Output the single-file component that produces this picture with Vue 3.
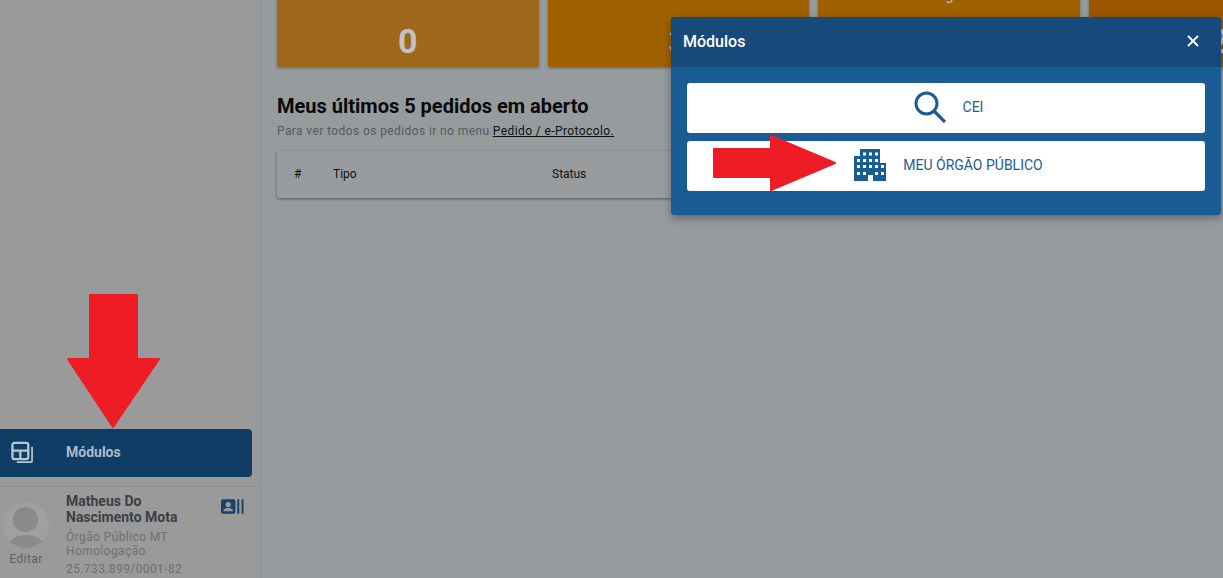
<script setup>
const cards = [
  { label: 'Pais', valor: '0', cor: '#a0681c' },
  { label: 'Em dia', valor: '3', cor: '#a06100' },
  { label: 'Pagos', valor: '1', cor: '#a06100' },
  { label: 'Prazos', valor: '2', cor: '#9c5600' }
]
const colunas = ['#', 'Tipo', 'Status']

// janelas do predio, em coordenadas do viewBox
const janelas = [
  [9, 3.5], [15, 3.5], [21, 3.5],
  [3, 10], [9, 10], [15, 10], [21, 10],
  [3, 16], [9, 16], [15, 16], [21, 16], [27, 16],
  [3, 23], [9, 23], [21, 23], [27, 23]
]
</script>

<template>
  <div class="pagina">
    <aside class="lateral">
      <div class="modulos">
        <svg class="icone-modulos" viewBox="0 0 24 24" fill="none" stroke="#b9c5d0" stroke-width="2.400">
          <rect x="1.500" y="2" width="16.500" height="17" rx="2" />
          <path d="M1.500 10h16.500M9.750 10v9" />
          <path d="M22 6v15a1 1 0 0 1-1 1H6" stroke-width="1.800" />
        </svg>
        <span>Módulos</span>
      </div>
      <div class="usuario">
        <div class="coluna-foto">
          <div class="avatar">
            <span class="cabeca"></span>
            <span class="corpo"></span>
          </div>
          <span class="editar">Editar</span>
        </div>
        <div class="dados">
          <strong>Matheus Do Nascimento Mota</strong>
          <p>Órgão Público MT<br />Homologação</p>
          <p class="cnpj">25.733.899/0001-82</p>
        </div>
        <svg class="icone-cartao" viewBox="0 0 24 15">
          <rect x="0" y="0" width="15" height="15" rx="2" fill="#17426b" />
          <circle cx="7.500" cy="5.500" r="2.700" fill="#9a9a9a" />
          <path d="M2.500 12.500c0-3 2.500-3.500 5-3.500s5 .5 5 3.500z" fill="#9a9a9a" />
          <path d="M18 0v15M22.500 0v15" stroke="#17426b" stroke-width="2" />
        </svg>
      </div>
    </aside>

    <main class="conteudo">
      <div class="cards">
        <div v-for="card in cards" :key="card.label" class="card" :style="{ background: card.cor }">
          <span class="card-label">{{ card.label }}</span>
          <span class="card-valor">{{ card.valor }}</span>
        </div>
      </div>
      <h2>Meus últimos 5 pedidos em aberto</h2>
      <p class="ajuda">Para ver todos os pedidos ir no menu <a>Pedido / e-Protocolo.</a></p>
      <div class="tabela">
        <span v-for="coluna in colunas" :key="coluna">{{ coluna }}</span>
      </div>
    </main>

    <div class="modal">
      <header>
        <span>Módulos</span>
        <svg class="fechar" viewBox="0 0 12 12" stroke="#fff" stroke-width="1.800">
          <path d="M1 1l10 10M11 1L1 11" />
        </svg>
      </header>
      <div class="modal-corpo">
        <button>
          <svg class="icone-busca" viewBox="0 0 32 32" fill="none" stroke="#1a5c94" stroke-width="3">
            <circle cx="12.500" cy="12.500" r="10.500" />
            <path d="M20 20l11 11" stroke-width="3.200" />
          </svg>
          <span>CEI</span>
        </button>
        <button>
          <svg class="icone-predio" viewBox="0 0 32 32">
            <path fill="#1a5c94" d="M6 0h20v14h6v18H19v-6h-5v6H0V7h6z" />
            <rect v-for="(j, i) in janelas" :key="i" :x="j[0]" :y="j[1]" width="3" height="3" fill="#fff" />
          </svg>
          <span>MEU ÓRGÃO PÚBLICO</span>
        </button>
      </div>
    </div>

    <svg class="seta seta-baixo" viewBox="0 0 94 134">
      <path fill="#ee1c25" stroke="#ee1c25" stroke-width="2" stroke-linejoin="round" d="M23 1h47v64h22L46 133 1 65h22z" />
    </svg>
    <svg class="seta seta-direita" viewBox="0 0 123 56">
      <path fill="#ee1c25" stroke="#ee1c25" stroke-width="2" stroke-linejoin="round" d="M1 14h57V1l64 27-64 27V42H1z" />
    </svg>
  </div>
</template>

<style scoped>
.pagina {
  position: relative;
  display: flex;
  height: 578px;
  overflow: hidden;
  background: #969b9e;
  font-family: Roboto, "Liberation Sans", sans-serif;
}

.lateral {
  flex: 0 0 261px;
  box-sizing: border-box;
  display: flex;
  flex-direction: column;
  justify-content: flex-end;
  background: #9a9a9a;
  border-right: 1px solid #8d8e8f;
}

.modulos {
  display: flex;
  align-items: center;
  gap: 32px;
  width: 252px;
  height: 48px;
  padding: 0 0 2px 11px;
  box-sizing: border-box;
  margin-bottom: 9px;
  background: #0f3d66;
  border-radius: 0 4px 4px 0;
  color: #aebbc7;
  font-size: 14px;
  font-weight: 700;
}

.icone-modulos {
  width: 23px;
  height: 23px;
}

.usuario {
  position: relative;
  display: flex;
  height: 92px;
  box-sizing: border-box;
  border-top: 1px solid #8f8f8f;
  padding: 6px 0 0 3px;
  overflow: hidden;
}

.coluna-foto {
  flex: 0 0 46px;
  display: flex;
  flex-direction: column;
  align-items: center;
  margin-right: 17px;
}

.avatar {
  position: relative;
  width: 46px;
  height: 46px;
  margin-top: 9px;
  border-radius: 50%;
  background: #a0a0a0;
  overflow: hidden;
}

.cabeca {
  position: absolute;
  left: 10px;
  top: 5px;
  width: 25px;
  height: 25px;
  border-radius: 50%;
  background: #8a8a8a;
}

.corpo {
  position: absolute;
  left: 4px;
  top: 33px;
  width: 38px;
  height: 26px;
  border-radius: 50%;
  background: #8a8a8a;
}

.editar {
  margin-top: 4px;
  color: #5f5f5f;
  font-size: 12px;
  letter-spacing: 0.4px;
}

.dados {
  width: 150px;
}

.dados strong {
  display: block;
  color: #3b3f47;
  font-size: 14px;
  line-height: 16px;
}

.dados p {
  margin: 5px 0 0;
  color: #6f6f6f;
  font-size: 12px;
  line-height: 14px;
  letter-spacing: 0.4px;
}

.dados .cnpj {
  margin-top: 4px;
}

.icone-cartao {
  position: absolute;
  left: 221px;
  top: 12px;
  width: 23px;
  height: 15px;
}

.conteudo {
  flex: 1;
  min-width: 0;
  padding: 0 16px;
}

.cards {
  display: grid;
  grid-template-columns: repeat(4, 261.5px);
  gap: 9px;
  margin-top: -33px;
}

.card {
  display: flex;
  flex-direction: column;
  align-items: center;
  height: 100px;
  box-sizing: border-box;
  padding-top: 21px;
  border-radius: 3px;
  box-shadow: 0 1px 3px rgba(0, 0, 0, 0.35);
  color: #c2c2c2;
}

.card-label {
  font-size: 14px;
  line-height: 14px;
}

.card-valor {
  margin-top: 19px;
  font-size: 34px;
  line-height: 40px;
  font-weight: 700;
}

h2 {
  margin: 27px 0 0;
  color: #0a0a0a;
  font-size: 20px;
  line-height: 24px;
  font-weight: 700;
}

.ajuda {
  margin: 6px 0 0;
  color: #575a5c;
  font-size: 12px;
  line-height: 14px;
  letter-spacing: 0.4px;
}

.ajuda a {
  color: #111;
  text-decoration: underline;
}

.tabela {
  position: relative;
  display: flex;
  align-items: center;
  width: 928px;
  height: 47px;
  margin-top: 13px;
  padding-bottom: 2px;
  box-sizing: border-box;
  border-radius: 3px;
  background: #999c9e;
  box-shadow: 0 1px 3px rgba(0, 0, 0, 0.45);
  color: #111;
  font-size: 12px;
}

.tabela span:nth-child(1) {
  margin-left: 17px;
  width: 39px;
}

.tabela span:nth-child(2) {
  width: 219px;
}

.modal {
  position: absolute;
  left: 671px;
  top: 17px;
  width: 550px;
  height: 198px;
  border-radius: 3px;
  background: #1a5c94;
  box-shadow: 0 3px 8px rgba(0, 0, 0, 0.35);
  overflow: hidden;
}

.modal header {
  display: flex;
  align-items: center;
  justify-content: space-between;
  height: 50px;
  padding: 0 22px 2px 12px;
  box-sizing: border-box;
  background: #174a7a;
  color: #fff;
  font-size: 16px;
  font-weight: 500;
}

.fechar {
  width: 12px;
  height: 12px;
}

.modal-corpo {
  display: flex;
  flex-direction: column;
  gap: 8px;
  padding: 16px;
}

.modal-corpo button {
  display: flex;
  align-items: center;
  justify-content: center;
  gap: 17px;
  height: 50px;
  padding: 0 0 2px 5px;
  border: none;
  border-radius: 3px;
  background: #fff;
  color: #1a5c94;
  font-family: inherit;
  font-size: 14px;
}

.icone-busca {
  width: 32px;
  height: 32px;
}

.icone-predio {
  width: 32px;
  height: 32px;
}

.seta {
  position: absolute;
}

.seta-baixo {
  left: 67px;
  top: 294px;
  width: 94px;
  height: 134px;
}

.seta-direita {
  left: 713px;
  top: 135px;
  width: 123px;
  height: 56px;
}
</style>
